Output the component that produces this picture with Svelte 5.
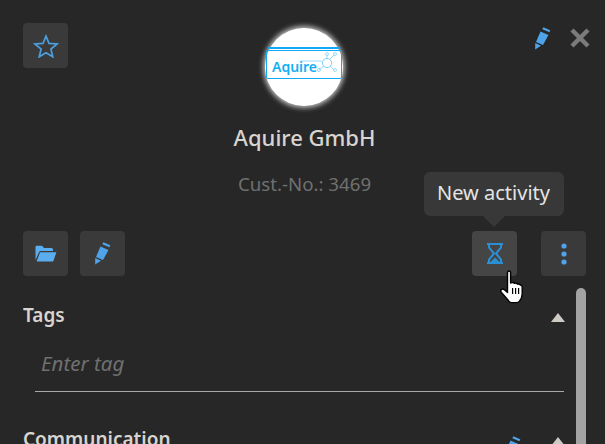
<script>
  const sections = [
    { title: "Tags", placeholder: "Enter tag" },
    { title: "Communication", editable: true },
  ];
</script>

{#snippet pencil()}
  <svg class="icon" width="16" height="23" viewBox="0 0 16 23">
    <path d="M8.3 0.3 L15.3 3.2 L14.4 5.2 L7.4 2.3 Z" fill="#4fa3ea" />
    <path d="M5.5 4.5 L13.5 8 L8 18 L1 15 Z" fill="#4fa3ea" />
    <path d="M0.2 16 L6 18.8 L0.2 22.6 Z" fill="#4fa3ea" />
  </svg>
{/snippet}

<div class="panel">
  <header class="top">
    <div class="left">
      <button class="square" aria-label="Favourite">
        <svg width="26" height="24" viewBox="0 0 26 24">
          <path
            d="M13 2.2 L16 9.4 L24 10 L17.9 15.1 L19.8 22.8 L13 18.7 L6.2 22.8 L8.1 15.1 L2 10 L10 9.4 Z"
            fill="none"
            stroke="#4b9fe0"
            stroke-width="1.7"
          />
        </svg>
      </button>
    </div>

    <div class="identity">
      <div class="logo">
        <div class="logo-box">
          <span class="logo-word">Aquire</span>
          <svg class="logo-net" width="48" height="24" viewBox="0 0 48 24">
            <g fill="none" stroke="#7fd4fb" stroke-width="0.8">
              <path d="M0 9 H22 M27 6 L27 3 M30 7 L34 3 M30 14 L34 18 M24 14 L19 18" />
              <circle cx="27" cy="11" r="4.6" stroke-width="1" />
              <circle cx="27" cy="2" r="1.5" />
              <circle cx="35" cy="2" r="1.5" />
              <circle cx="35" cy="18" r="1.5" />
              <circle cx="19" cy="18" r="1.5" />
            </g>
          </svg>
        </div>
      </div>
      <h1>Aquire GmbH</h1>
      <p>Cust.-No.: 3469</p>
    </div>

    <div class="right">
      <button class="bare" aria-label="Edit">{@render pencil()}</button>
      <button class="bare" aria-label="Close">
        <svg width="20" height="20" viewBox="0 0 20 20">
          <path d="M2 2 L18 18 M18 2 L2 18" stroke="#7b7b7b" stroke-width="4.4" />
        </svg>
      </button>
    </div>
  </header>

  <div class="actions">
    <div class="group">
      <button class="square" aria-label="Open folder">
        <svg width="22" height="18" viewBox="0 0 22 18">
          <path d="M0.5 15 V2 Q0.5 0.8 1.7 0.8 H7 L9 3 H16.5 Q18 3 18 4.5 V6 H6 Q4.6 6 4 7.2 Z" fill="#5aaef0" />
          <path d="M5 7.2 H21.4 L18.2 16.6 H1.6 Z" fill="#5aaef0" />
        </svg>
      </button>
      <button class="square" aria-label="Edit">{@render pencil()}</button>
    </div>
    <div class="group gap-wide">
      <div class="tip-anchor">
        <button class="square hover" aria-label="New activity">
          <svg width="18" height="21" viewBox="0 0 18 21">
            <path
              d="M1 1 H17 M1 20 H17 M3 1.5 V4.5 L8 10.5 L3 16.5 V19.5 M15 1.5 V4.5 L10 10.5 L15 16.5 V19.5"
              fill="none"
              stroke="#2b8fd6"
              stroke-width="2"
            />
            <path d="M4.5 19 L9 14.5 L13.5 19 Z" fill="#2b8fd6" />
          </svg>
        </button>
        <div class="tooltip">New activity</div>
      </div>
      <button class="square" aria-label="More">
        <svg width="6" height="22" viewBox="0 0 6 22">
          <circle cx="3" cy="3" r="2.6" fill="#4fa3ea" />
          <circle cx="3" cy="11" r="2.6" fill="#4fa3ea" />
          <circle cx="3" cy="19" r="2.6" fill="#4fa3ea" />
        </svg>
      </button>
    </div>
  </div>

  {#each sections as section}
    <section>
      <div class="section-head">
        <h2>{section.title}</h2>
        <div class="section-tools">
          {#if section.editable}
            <button class="bare low" aria-label="Edit">{@render pencil()}</button>
          {/if}
          <span class="caret"></span>
        </div>
      </div>
      {#if section.placeholder}
        <input class="field" type="text" placeholder={section.placeholder} />
      {/if}
    </section>
  {/each}

  <div class="scrollbar"></div>

  <svg class="cursor" width="28" height="34" viewBox="0 0 28 34">
    <path
      d="M8.5 2.5 Q8.5 1 10 1 Q11.6 1 11.6 2.5 V13 L13 12.6 Q14.6 12 15.4 13.4 Q17.4 12.6 18.4 14.2 Q20.4 13.6 21.4 15 Q23 15 23.2 17 V24 Q23 28 20.6 31 Q19.6 32.6 17 32.6 H12.6 Q10.4 32.6 9 30 L2.4 22.4 Q1 20.6 2.6 19.4 Q4 18.6 5.4 19.8 L8.5 22.4 Z"
      fill="#fff"
      stroke="#000"
      stroke-width="1.4"
      stroke-linejoin="round"
    />
    <path d="M13.6 18 V24 M16.6 18 V24 M19.6 18 V24" stroke="#000" stroke-width="1.2" />
  </svg>
</div>

<style>
  :global(body) {
    background: #272727;
  }

  .panel {
    position: relative;
    height: 444px;
    overflow: hidden;
    box-sizing: border-box;
    padding: 23px 23px 0;
    background: #272727;
    font-family: "Noto Sans", "Open Sans", sans-serif;
    color: #d8d4cf;
  }

  button {
    padding: 0;
    border: 0;
    background: none;
    display: flex;
    align-items: center;
    justify-content: center;
  }

  .square {
    width: 45px;
    height: 45px;
    border-radius: 4px;
    background: #3a3a3a;
  }

  .square.hover {
    background: #454545;
  }

  .top {
    display: grid;
    grid-template-columns: 1fr auto 1fr;
  }

  .right {
    display: flex;
    justify-content: flex-end;
    gap: 19px;
    height: 24px;
    margin: 3px -8px 0 0;
  }

  .identity {
    display: flex;
    flex-direction: column;
    align-items: center;
    margin-top: 4px;
    padding-left: 4px;
  }

  .logo {
    width: 78px;
    height: 78px;
    margin: 1px 2px 1px 1px;
    border-radius: 50%;
    background: #fff;
    box-shadow: 0 0 5px 2px rgba(255, 255, 255, 0.7);
    display: flex;
    align-items: center;
    justify-content: center;
  }

  .logo-box {
    position: relative;
    flex: none;
    width: 76px;
    height: 29px;
    margin-bottom: 5px;
    box-sizing: border-box;
    border: 1.5px solid #12a8f5;
    border-radius: 2px;
    display: flex;
    align-items: center;
    padding: 5px 0 0 5px;
  }

  .logo-box::before {
    content: "";
    position: absolute;
    left: 1px;
    right: 1px;
    top: -4px;
    height: 2px;
    background: #12a8f5;
  }

  .logo-word {
    font-size: 14px;
    font-weight: 600;
    color: #14aef5;
    line-height: 1;
  }

  .logo-net {
    position: absolute;
    left: 33px;
    top: 0.5px;
  }

  h1 {
    margin: 15px 0 0;
    font-size: 22px;
    font-weight: 500;
    line-height: 30px;
  }

  p {
    margin: 19px 0 0;
    font-size: 18.7px;
    line-height: 26px;
    color: #707070;
  }

  .actions {
    display: flex;
    justify-content: space-between;
    margin-top: 34px;
    margin-right: -4px;
  }

  .group {
    display: flex;
    gap: 12px;
  }

  .gap-wide {
    gap: 24px;
  }

  .tip-anchor {
    position: relative;
  }

  .tooltip {
    position: absolute;
    left: 50%;
    bottom: 60px;
    transform: translateX(-50%);
    margin-left: -1px;
    width: 140px;
    height: 44px;
    border-radius: 6px;
    background: #383838;
    color: #e4e4e4;
    font-size: 20px;
    line-height: 42px;
    text-align: center;
  }

  .tooltip::after {
    content: "";
    position: absolute;
    left: 50%;
    top: 100%;
    margin-left: -11px;
    border: 11px solid transparent;
    border-bottom: 0;
    border-top-color: #383838;
  }

  section {
    padding: 28px 18px 8px 0;
  }

  .section-head {
    display: flex;
    justify-content: space-between;
    align-items: center;
    height: 26px;
  }

  h2 {
    margin: 0 0 4px;
    font-size: 19px;
    font-weight: 600;
    line-height: 26px;
  }

  .section-tools {
    display: flex;
    align-items: center;
    gap: 30px;
  }

  .low {
    margin-top: 12px;
  }

  .caret {
    width: 0;
    height: 0;
    margin-right: -1px;
    border: 7px solid transparent;
    border-top: 0;
    border-bottom: 9px solid #cfcac4;
  }

  .field {
    display: block;
    box-sizing: border-box;
    width: 529px;
    height: 52px;
    margin: 10px 0 0 12px;
    padding: 0 6px 6px;
    background: none;
    border: 0;
    border-bottom: 1px solid #a8a8a8;
    border-radius: 0;
    outline: none;
    font-family: inherit;
    font-size: 20.5px;
    font-style: italic;
    color: #707070;
  }

  .field::placeholder {
    color: #707070;
    opacity: 1;
  }

  .scrollbar {
    position: absolute;
    left: 576px;
    top: 288px;
    bottom: 0;
    width: 10px;
    border-radius: 5px 5px 0 0;
    background: #a3a3a3;
  }

  .cursor {
    position: absolute;
    left: 499px;
    top: 270px;
  }
</style>
